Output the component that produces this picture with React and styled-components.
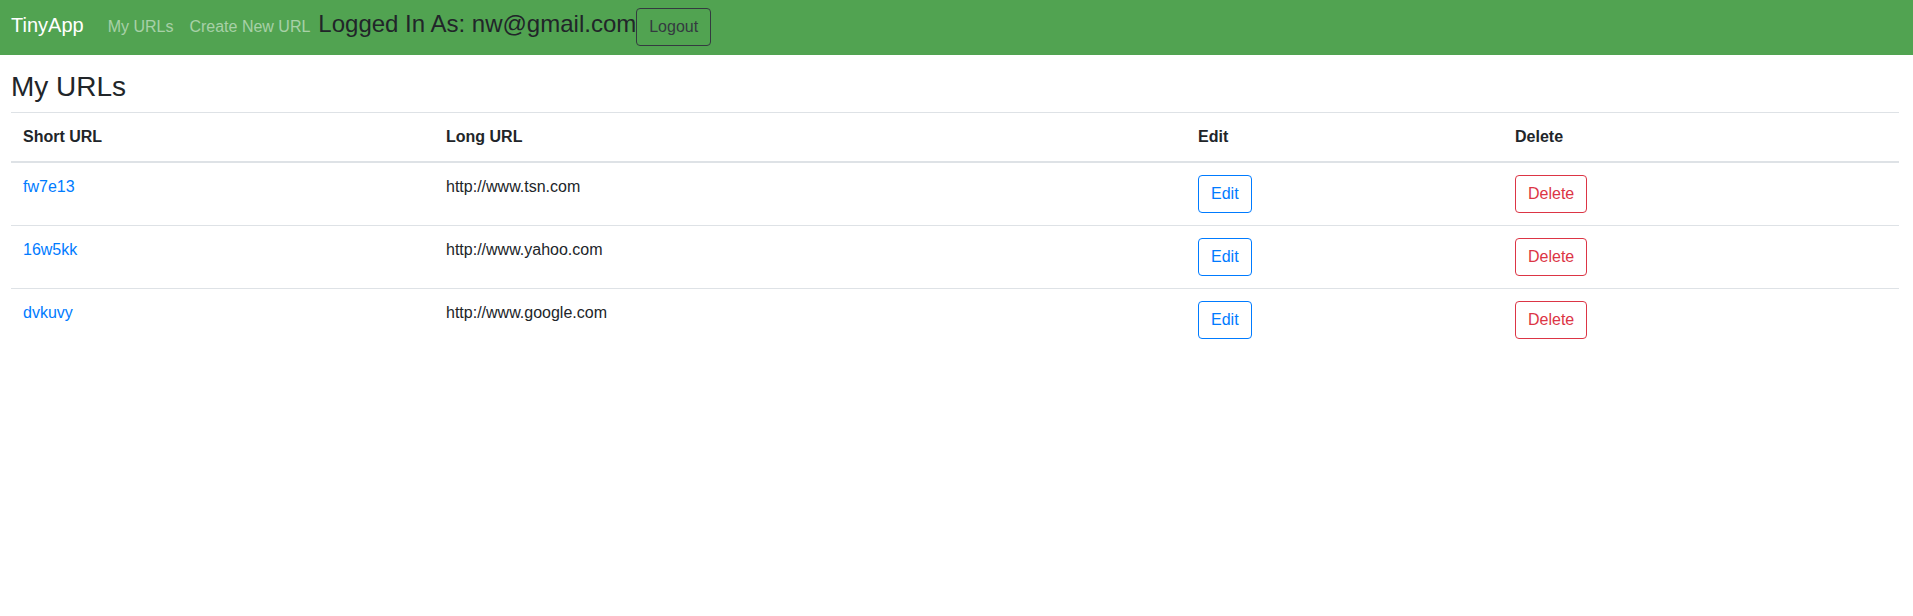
import React from "react";
import styled, { createGlobalStyle } from "styled-components";

const GlobalStyle = createGlobalStyle`
  * {
    box-sizing: border-box;
  }

  body {
    margin: 0;
    font-family: "Liberation Sans", Arial, sans-serif;
    font-size: 16px;
    line-height: 1.5;
    color: #212529;
    background: #fff;
  }
`;

const Navbar = styled.nav`
  display: flex;
  align-items: baseline;
  height: 55px;
  padding: 5px 11px 0;
  background: #51a351;
`;

const Brand = styled.a`
  font-size: 20px;
  line-height: 30px;
  padding: 5px 0;
  margin-right: 16px;
  color: #fff;
  text-decoration: none;
`;

const NavLink = styled.a`
  padding: 8px;
  line-height: 24px;
  color: rgba(255, 255, 255, 0.5);
  text-decoration: none;
`;

const LoggedIn = styled.span`
  font-size: 24px;
  line-height: 1.2;
  color: #212529;
`;

const Button = styled.button`
  font-family: inherit;
  font-size: 16px;
  line-height: 24px;
  padding: 6px 12px;
  background: transparent;
  border: 1px solid ${p => p.$color};
  border-radius: 4px;
  color: ${p => p.$color};
  cursor: pointer;
`;

const Main = styled.main`
  padding: 15px 14px 0 11px;
`;

const Title = styled.h3`
  margin: 0 0 8px;
  font-size: 28px;
  font-weight: 400;
  line-height: 1.2;
`;

const Table = styled.table`
  width: 100%;
  border-collapse: collapse;
  table-layout: fixed;
`;

const Th = styled.th`
  width: ${p => p.$width}px;
  padding: 12px;
  text-align: left;
  font-weight: 700;
  vertical-align: bottom;
  border-top: 1px solid #dee2e6;
  border-bottom: 2px solid #dee2e6;
`;

const Td = styled.td`
  padding: 12px;
  vertical-align: top;
  border-top: 1px solid #dee2e6;
`;

const ShortLink = styled.a`
  color: #007bff;
  text-decoration: none;
`;

const urls = [
  { id: "fw7e13", long: "http://www.tsn.com" },
  { id: "16w5kk", long: "http://www.yahoo.com" },
  { id: "dvkuvy", long: "http://www.google.com" }
];

export default function App() {
  return (
    <>
      <GlobalStyle />
      <Navbar>
        <Brand href="#">TinyApp</Brand>
        <NavLink href="#">My URLs</NavLink>
        <NavLink href="#">Create New URL</NavLink>
        <LoggedIn>Logged In As: nw@gmail.com</LoggedIn>
        <Button $color="#343a40">Logout</Button>
      </Navbar>
      <Main>
        <Title>My URLs</Title>
        <Table>
          <thead>
            <tr>
              <Th $width={423}>Short URL</Th>
              <Th $width={752}>Long URL</Th>
              <Th $width={317}>Edit</Th>
              <Th>Delete</Th>
            </tr>
          </thead>
          <tbody>
            {urls.map(url => (
              <tr key={url.id}>
                <Td>
                  <ShortLink href="#">{url.id}</ShortLink>
                </Td>
                <Td>{url.long}</Td>
                <Td>
                  <Button $color="#007bff">Edit</Button>
                </Td>
                <Td>
                  <Button $color="#dc3545">Delete</Button>
                </Td>
              </tr>
            ))}
          </tbody>
        </Table>
      </Main>
    </>
  );
}
